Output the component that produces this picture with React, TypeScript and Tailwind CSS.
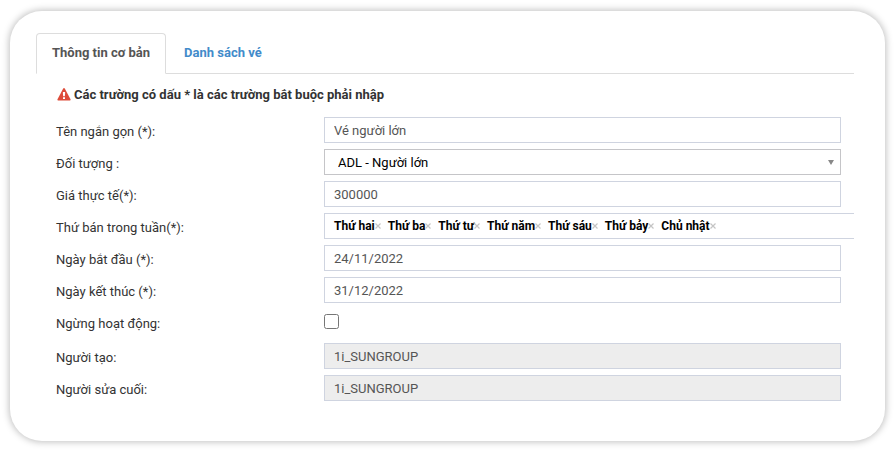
import { useState } from "react";
import type { ReactNode } from "react";

const TABS = ["Thông tin cơ bản", "Danh sách vé"];
const WEEKDAYS = ["Thứ hai", "Thứ ba", "Thứ tư", "Thứ năm", "Thứ sáu", "Thứ bảy", "Chủ nhật"];

const inputClass =
  "block h-[26px] w-full border border-[#cfd4e0] bg-white px-[9px] text-[13px] text-[#555] outline-none read-only:bg-[#ededed]";

const WarningIcon = () => (
  <svg className="h-3.5 w-3.5 shrink-0" viewBox="0 0 14 14" aria-hidden="true">
    <path
      d="M6.2 .6Q7 -.6 7.8 .6L13.5 11.2Q13.9 12.4 12.9 12.4H1.1Q.1 12.4 .5 11.2Z"
      fill="#dd4b39"
    />
    <path d="M5.9 4h2.2v1.8L7.8 8.2H6.2L5.9 5.8zM6 9.2h2v1.7H6z" fill="#fff" />
  </svg>
);

const Row = ({ label, id, children }: { label: string; id: string; children: ReactNode }) => (
  <div className="flex">
    <label htmlFor={id} className="w-[268px] shrink-0 pt-[5px] text-[13px] leading-5 text-[#333]">
      {label}
    </label>
    <div className="min-w-0 flex-1">{children}</div>
  </div>
);

const WeekdayTags = ({ id }: { id: string }) => {
  const [days, setDays] = useState(WEEKDAYS);

  return (
    <div
      id={id}
      className="-mr-[13px] flex h-[26px] gap-[7px] overflow-hidden border border-r-0 border-[#cfd4e0] px-[9px]"
    >
      {days.map((day) => (
        <span key={day} className="flex items-center whitespace-nowrap text-xs font-bold text-black">
          {day}
          <button
            type="button"
            aria-label={`Xóa ${day}`}
            onClick={() => setDays(days.filter((d) => d !== day))}
            className="w-1.5 text-[#c4c4c4]"
          >
            <svg className="h-1.5 w-1.5" viewBox="0 0 6 6" stroke="currentColor" strokeWidth="1.2">
              <path d="M.5 .5l5 5M5.5 .5l-5 5" />
            </svg>
          </button>
        </span>
      ))}
    </div>
  );
};

export default function App() {
  const [activeTab, setActiveTab] = useState(0);

  return (
    <main className="bg-white px-2.5 pt-[11px] pb-2.5 font-['Roboto',sans-serif] text-[13px]">
      <div className="rounded-[32px] bg-white pt-[22px] pr-[31px] pb-10 pl-[26px] shadow-[0_0_7px_1px_rgba(0,0,0,0.25)]">
        {/* Tabs */}
        <div className="flex border-b border-[#ddd]">
          {TABS.map((tab, i) => (
            <button
              key={tab}
              type="button"
              onClick={() => setActiveTab(i)}
              className={`-mb-px mr-0.5 h-[41px] rounded-t border px-[15px] pb-0.5 font-bold ${
                i === activeTab
                  ? "border-[#ddd] border-b-white bg-white text-[#555]"
                  : "border-transparent text-[#428bca]"
              }`}
            >
              {tab}
            </button>
          ))}
        </div>

        <form className="pr-[13px] pl-5">
          <p className="flex items-center gap-[3px] pt-[11px] pb-3 pl-px leading-5 font-bold text-[#333]">
            <WarningIcon />
            Các trường có dấu * là các trường bắt buộc phải nhập
          </p>

          <div className="flex flex-col gap-1.5">
            <Row label="Tên ngắn gọn (*):" id="name">
              <input id="name" className={inputClass} defaultValue="Vé người lớn" />
            </Row>
            <Row label="Đối tượng :" id="target">
              <div className="relative">
                <select
                  id="target"
                  className="block h-[26px] w-full appearance-none border border-[#c5c5c8] bg-white px-[13px] pt-0.5 text-[13px] text-black outline-none"
                >
                  <option>ADL - Người lớn</option>
                </select>
                <svg
                  className="pointer-events-none absolute top-[11px] right-[7px] h-[5px] w-1.5"
                  viewBox="0 0 6 5"
                  fill="#888"
                >
                  <path d="M0 0h6L3 5z" />
                </svg>
              </div>
            </Row>
            <Row label="Giá thực tế(*):" id="price">
              <input id="price" className={inputClass} defaultValue="300000" />
            </Row>
            <Row label="Thứ bán trong tuần(*):" id="weekdays">
              <WeekdayTags id="weekdays" />
            </Row>
            <Row label="Ngày bắt đầu (*):" id="start">
              <input id="start" className={inputClass} defaultValue="24/11/2022" />
            </Row>
            <Row label="Ngày kết thúc (*):" id="end">
              <input id="end" className={inputClass} defaultValue="31/12/2022" />
            </Row>
            <Row label="Ngừng hoạt động:" id="inactive">
              <div className="flex h-7 items-start pt-[5px]">
                <input id="inactive" type="checkbox" className="h-[15px] w-[15px]" />
              </div>
            </Row>
            <Row label="Người tạo:" id="creator">
              <input id="creator" className={inputClass} value="1i_SUNGROUP" readOnly />
            </Row>
            <Row label="Người sửa cuối:" id="editor">
              <input id="editor" className={inputClass} value="1i_SUNGROUP" readOnly />
            </Row>
          </div>
        </form>
      </div>
    </main>
  );
}
